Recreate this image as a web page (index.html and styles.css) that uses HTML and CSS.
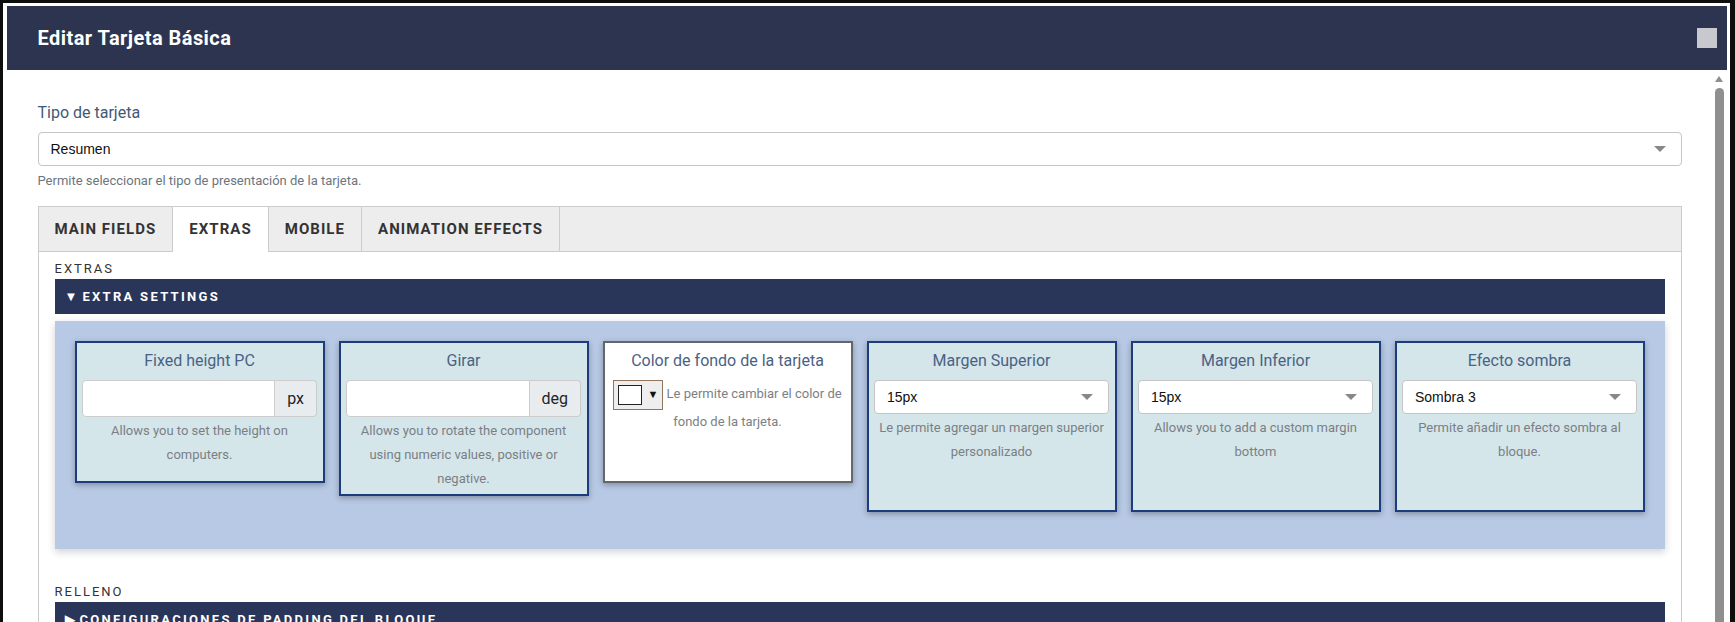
FILE: index.html
```html
<!DOCTYPE html>
<html lang="es">
  <head>
    <meta charset="UTF-8" />
    <meta name="viewport" content="width=device-width, initial-scale=1.0" />
    <title>Editar Tarjeta Básica</title>
    <link rel="stylesheet" href="styles.css">
  </head>
  <body>
    <div class="modal">
      <div class="modal-header">
        <h2>Editar Tarjeta Básica</h2>
        <span class="close-box"></span>
      </div>

      <div class="modal-body">
        <div class="scroll-content">
          <label class="field-label">Tipo de tarjeta</label>
          <div class="select"><span>Resumen</span><span class="caret"></span></div>
          <p class="field-help">Permite seleccionar el tipo de presentación de la tarjeta.</p>

          <div class="tabs">
            <div class="tab-list">
              <div class="tab">MAIN FIELDS</div>
              <div class="tab active">EXTRAS</div>
              <div class="tab">MOBILE</div>
              <div class="tab">ANIMATION EFFECTS</div>
            </div>

            <div class="tab-panel">
              <div class="group-label">EXTRAS</div>
              <div class="group-bar"><span class="bar-arrow">&#9660;</span>EXTRA SETTINGS</div>

              <div class="group-body">
                <div class="card">
                  <div class="card-title">Fixed height PC</div>
                  <div class="input-group">
                    <input type="text" />
                    <span class="addon">px</span>
                  </div>
                  <p class="card-help">Allows you to set the height on computers.</p>
                </div>

                <div class="card">
                  <div class="card-title">Girar</div>
                  <div class="input-group">
                    <input type="text" />
                    <span class="addon">deg</span>
                  </div>
                  <p class="card-help">Allows you to rotate the component using numeric values, positive or negative.</p>
                </div>

                <div class="card card-white">
                  <div class="card-title">Color de fondo de la tarjeta</div>
                  <p class="card-help color-help">
                    <span class="color-btn"><span class="swatch"></span><span class="dd">&#9660;</span></span>
                    Le permite cambiar el color de fondo de la tarjeta.
                  </p>
                </div>

                <div class="card card-select">
                  <div class="card-title">Margen Superior</div>
                  <div class="select"><span>15px</span><span class="caret"></span></div>
                  <p class="card-help">Le permite agregar un margen superior personalizado</p>
                </div>

                <div class="card card-select">
                  <div class="card-title">Margen Inferior</div>
                  <div class="select"><span>15px</span><span class="caret"></span></div>
                  <p class="card-help">Allows you to add a custom margin bottom</p>
                </div>

                <div class="card card-select">
                  <div class="card-title">Efecto sombra</div>
                  <div class="select"><span>Sombra 3</span><span class="caret"></span></div>
                  <p class="card-help">Permite añadir un efecto sombra al bloque.</p>
                </div>
              </div>

              <div class="group-label">RELLENO</div>
              <div class="group-bar"><span class="bar-arrow">&#9654;</span>CONFIGURACIONES DE PADDING DEL BLOQUE</div>
            </div>
          </div>
        </div>

        <!-- scrollbar of the modal body -->
        <div class="scrollbar">
          <span class="scroll-up"></span>
          <span class="scroll-thumb"></span>
        </div>
      </div>
    </div>
  </body>
</html>
```

FILE: styles.css
```css
* {
  box-sizing: border-box;
  margin: 0;
  padding: 0;
}

body {
  height: 100vh;
  overflow: hidden;
  background: #0e0e0e;
  font-family: Roboto, "Noto Sans", sans-serif;
  color: #333;
}

.modal {
  margin: 3px 5px 0 3px;
  padding: 3px 3.5px 0;
  background: #fff;
}

/* Header */
.modal-header {
  height: 64px;
  display: flex;
  align-items: center;
  justify-content: space-between;
  padding: 0 10px 0 31px;
  background: #2c3450;
}

.modal-header h2 {
  font-size: 20px;
  font-weight: 700;
  letter-spacing: 0.45px;
  color: #fff;
}

.close-box {
  width: 20px;
  height: 20px;
  background: #c8c9cf;
}

/* Body */
.modal-body {
  display: flex;
  height: 780px;
  overflow: hidden;
}

.scroll-content {
  flex: 1;
  min-width: 0;
  padding: 32px 30px 0 31px;
}

.scrollbar {
  width: 15px;
  display: flex;
  flex-direction: column;
  align-items: center;
  padding-top: 6px;
  background: #fff;
}

.scroll-up {
  width: 0;
  height: 0;
  border-left: 4.5px solid transparent;
  border-right: 4.5px solid transparent;
  border-bottom: 6px solid #8f8f8f;
}

.scroll-thumb {
  width: 9px;
  height: 640px;
  margin-top: 6px;
  border-radius: 5px;
  background: #8f8f8f;
}

.field-label {
  display: block;
  font-size: 16px;
  line-height: 22px;
  color: #3f5878;
  margin-bottom: 8px;
}

.select {
  height: 34px;
  display: flex;
  align-items: center;
  justify-content: space-between;
  padding: 0 15px 0 12px;
  background: #fff;
  border: 1px solid #c5c5c5;
  border-radius: 4px;
  font-family: "Liberation Sans", Arial, sans-serif;
  font-size: 14px;
  color: #111;
  text-align: left;
}

.caret {
  border-left: 6px solid transparent;
  border-right: 6px solid transparent;
  border-top: 6px solid #888;
}

.field-help {
  font-size: 13px;
  line-height: 18px;
  color: #6c757d;
  margin: 6px 0 16px;
}

/* Tabs */
.tabs {
  border: 1px solid #ccc;
  border-bottom: none;
}

.tab-list {
  display: flex;
  background: #ededed;
  border-bottom: 1px solid #ccc;
}

.tab {
  padding: 0 16px;
  line-height: 44px;
  font-size: 15px;
  font-weight: 700;
  letter-spacing: 1.05px;
  color: #333;
  border-right: 1px solid #ccc;
}

.tab.active {
  background: #fff;
  line-height: 45px;
  margin-bottom: -1px;
}

.tab-panel {
  padding: 8px 16px 300px;
}

.group-label {
  font-size: 13px;
  line-height: 18px;
  letter-spacing: 2px;
  color: #333;
  margin-bottom: 1px;
}

.group-bar {
  height: 35px;
  display: flex;
  align-items: center;
  padding-left: 10px;
  background: #29365a;
  color: #fff;
  font-size: 13px;
  font-weight: 700;
  letter-spacing: 2.3px;
}

.bar-arrow {
  font-size: 13px;
  margin-right: 5px;
  letter-spacing: 0;
}

.group-body {
  display: grid;
  grid-template-columns: repeat(6, 1fr);
  gap: 14px;
  align-items: start;
  margin: 7px 0 34px;
  padding: 20px 20px 37px;
  background: #b8c9e5;
  box-shadow: 0 3px 8px rgba(0, 0, 0, 0.18);
}

/* Cards */
.card {
  min-height: 142px;
  padding: 6px 5.5px 3px;
  background: #d4e6ea;
  border: 2px solid #1d3c7b;
  box-shadow: 0 2px 6px rgba(0, 0, 0, 0.3);
  text-align: center;
}

.card-select {
  min-height: 171px;
}

.card-white {
  background: #fff;
  border-color: #63666b;
}

.card-title {
  font-size: 16px;
  line-height: 24px;
  color: #4a6284;
  margin-bottom: 7px;
}

.input-group {
  display: flex;
  height: 37px;
}

.input-group input {
  flex: 1;
  min-width: 0;
  border: 1px solid #ccc;
  border-radius: 4px 0 0 4px;
  background: #fff;
}

.addon {
  display: flex;
  align-items: center;
  padding: 0 12px;
  background: #e9ecef;
  border: 1px solid #ccc;
  border-left: none;
  border-radius: 0 4px 4px 0;
  font-size: 16px;
  color: #212529;
}

.card-help {
  margin-top: 2px;
  font-size: 13px;
  line-height: 24px;
  color: #7b7f85;
}

.color-help {
  margin-top: 0;
}

.color-btn {
  display: inline-flex;
  align-items: center;
  vertical-align: middle;
  width: 50px;
  height: 30px;
  padding: 4px;
  background: #eee;
  border: 1px solid #91765d;
}

.swatch {
  width: 25px;
  height: 20px;
  margin-right: 5px;
  background: #fff;
  border: 1px solid #222;
}

.dd {
  font-size: 11px;
  color: #111;
}
```
